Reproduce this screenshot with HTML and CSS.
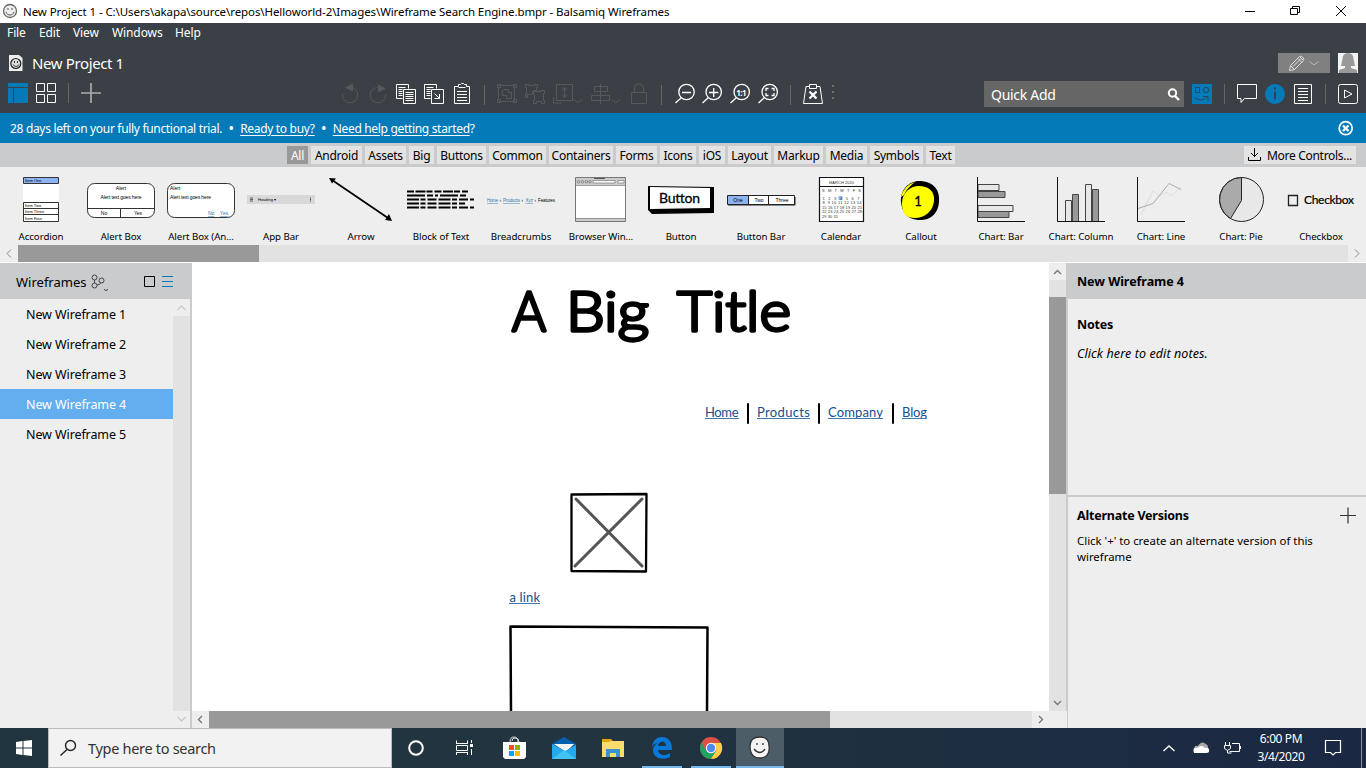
FILE: index.html
```html
<!DOCTYPE html>
<html lang="en">
<head>
<meta charset="utf-8">
<title>New Project 1 - Balsamiq Wireframes</title>
<link rel="stylesheet" href="styles.css">
</head>
<body>
<div class="app">
<header class="titlebar">
  <svg class="logo" width="20" height="23" viewBox="0 0 20 23"><circle cx="10" cy="11" r="6.5" fill="#eee" stroke="#666" stroke-width="1.3"/><path d="M8 8v2M12 8v2M6 12c1 4 7 4 8 0" fill="none" stroke="#555"/></svg>
  <span class="window-title">New Project 1 - C:\Users\akapa\source\repos\Helloworld-2\Images\Wireframe Search Engine.bmpr - Balsamiq Wireframes</span>
  <svg class="push" width="130" height="23" viewBox="1236 0 130 23" fill="none" stroke="#000"><path d="M1245 11.500h10M1290.500 8.500h7v6h-7zM1292.500 8.500v-2h7v6h-2M1336 6l10 10M1346 6l-10 10"/></svg>
</header>
<nav class="menubar"><span class="m1">File</span><span class="m2">Edit</span><span class="m3">View</span><span class="m4">Windows</span><span>Help</span></nav>
<div class="projectbar">
  <svg width="32" height="27" viewBox="0 50 32 27"><path d="M9 55h10l3.500 3v13H9z" fill="#eee"/><circle cx="15.800" cy="63.500" r="5" fill="#ddd" stroke="#222" stroke-width="1.200"/><path d="M14.500 61v2M17.500 61v2M13 64.500c1 2.500 5 2.500 6 0" fill="none" stroke="#222" stroke-width=".9"/></svg>
  <span class="project-name">New Project 1</span>
  <svg class="push" width="92" height="27" viewBox="1274 50 92 27"><path d="M1278 53h52v20h-52z" fill="#808080"/><g fill="none" stroke="#ddd"><path d="M1289.500 70.500l1-5 9-9q2-1 3.500 1t.5 3l-9 9zM1290.500 65.500l4 4M1293 66.500l8-8M1298 58.500l4 4M1300 57l3.500 3.500"/><path d="M1309.500 61.500l4.500 3.500 4.500-3.500" stroke="#bbb"/></g><path d="M1338 53h20v20h-20z" fill="#f4f4f4"/><path d="M1339 73v-3l6-2v-2h-4l1.500-7q0-6 5.500-6t5.500 6l1.500 7h-4v2l6 2v3z" fill="#999"/></svg>
</div>
<div class="toolbar">
  <svg width="110" height="30" viewBox="0 80 110 30"><path d="M8 83h20v4H8zM8 88h5v15H8zM14 88h14v15H14z" fill="#057ab9"/><g fill="none" stroke="#fff"><path d="M36.500 83.500h8v8h-8zM47.500 83.500h8v8h-8zM36.500 94.500h8v8h-8zM47.500 94.500h8v8h-8z"/><path d="M68.500 83v20" stroke="#666"/><path d="M81 93h20M91 83v20" stroke="#aaa" stroke-width="1.700"/></g></svg>
  <div class="tools">
    <svg width="28" height="30" viewBox="336 80 28 30" class="off"><path d="M342.500 94a7.700 7.700 0 1 0 8-6.500"/><path d="M345 87.500l8-4v8z" fill="#585858" stroke="none"/></svg>
    <svg width="28" height="30" viewBox="364 80 28 30" class="off"><path d="M385.500 94a7.700 7.700 0 1 1-8-6.500"/><path d="M386 88.500l-8-4v8z" fill="#585858" stroke="none"/></svg>
    <svg width="28" height="30" viewBox="392 80 28 30" class="on"><path d="M402.500 98.500h-6v-14h12v4M403.500 89.500h12v14h-12zM398.500 87.500h7M398.500 89.500h4M398.500 91.500h4M398.500 93.500h4M398.500 95.500h4M405.500 92.500h8M405.500 94.500h8M405.500 96.500h8M405.500 98.500h8M405.500 100.500h8"/></svg>
    <svg width="28" height="30" viewBox="420 80 28 30" class="on"><path d="M430.500 98.500h-6v-14h12v4M431.500 89.500h12v14h-12zM426.500 87.500h7M426.500 89.500h4M426.500 91.500h4M426.500 93.500h4M426.500 95.500h4M434.500 93.500l5 5M439.500 94v4.500h-5"/></svg>
    <svg width="28" height="30" viewBox="448 80 28 30" class="on"><path d="M454.500 86.500h4v-2h2l1-1h2l1 1h2v2h3v17h-15zM458.500 87.500h7M457 91.500h10M457 94.500h10M457 97.500h10M457 100.500h10"/></svg>
    <i class="sep s1"></i>
    <svg width="28" height="30" viewBox="493 80 28 30" class="off"><path d="M499 85.500h16M499 101.500h16M498.500 87v13M514.500 87v13M497.500 84.500h3v3h-3zM513.500 84.500h3v3h-3zM497.500 99.500h3v3h-3zM513.500 99.500h3v3h-3zM503.500 89.500h5v3h3v6h-5v-3h-4v-5z"/></svg>
    <svg width="28" height="30" viewBox="521 80 28 30" class="off"><path d="M525.500 84.500h3v1h6v-1h3v3h-1v4h-4v3h-5v3h-2v-3h1v-7h-1zM533.500 90.500h3v1h5v-1h3v3h-1v7h1v3h-3v-2h-5v2h-3v-3h1v-7h-1z"/></svg>
    <svg width="38" height="30" viewBox="549 80 38 30" class="off"><path d="M556.500 84.500h16v16h-16zM553.500 97v6h8M564.500 88v9M562 90.500l2.500-3 2.500 3M562 94.500l2.500 3 2.500-3M573.500 99.500l4.500 3 4.500-3"/></svg>
    <svg width="38" height="30" viewBox="587 80 38 30" class="off"><path d="M600.500 84v20M594.500 86.500h13v5h-13zM591.500 95.500h18v5h-18zM611.500 99.500l4.500 3 4.500-3"/></svg>
    <svg width="28" height="30" viewBox="625 80 28 30" class="off"><path d="M631.500 92.500h15v11h-15zM634.500 92v-3q0-5 4.500-5t4.500 5v3"/></svg>
    <i class="sep s2"></i>
    <svg width="28" height="30" viewBox="671 80 28 30" class="zoomer"><circle cx="686.500" cy="92" r="7.700"/><path d="M681 98l-5.500 5M682 92.500h9"/></svg>
    <svg width="28" height="30" viewBox="699 80 28 30" class="zoomer"><circle cx="713.700" cy="92" r="7.700"/><path d="M708 98l-5.500 5M709 92.500h9.500M713.700 88v9"/></svg>
    <svg width="28" height="30" viewBox="727 80 28 30" class="zoomer"><circle cx="741.700" cy="92" r="7.700"/><path d="M736 98l-5.500 5"/><text x="736.200" y="95.500" textLength="10.500" class="onetoone">1:1</text></svg>
    <svg width="28" height="30" viewBox="755 80 28 30" class="zoomer"><circle cx="769.700" cy="92" r="7.700"/><path d="M764 98l-5.500 5M768.500 88.500h-2.500v2.500M771.500 88.500h2.500v2.500M768.500 95.500h-2.500v-2.500M771.500 95.500h2.500v-2.500"/></svg>
    <i class="sep s3"></i>
    <svg width="28" height="30" viewBox="799 80 28 30" class="on"><path d="M809.500 86.500h-3.500l-2.500 17h19l-2.500-17h-3.500M809.500 84.500h7v4h-7z"/><path d="M809.500 91.500l7 7M816.500 91.500l-7 7" stroke-width="2.300"/></svg>
    <svg width="12" height="30" viewBox="827 80 12 30" fill="#707070"><path d="M832 85h2v2h-2zM832 91h2v2h-2zM832 97h2v2h-2z"/></svg>
  </div>
  <div class="quickadd"><span>Quick Add</span><svg width="18" height="26" viewBox="1165 81 18 26" fill="none" stroke="#fff" stroke-width="2"><circle cx="1172.500" cy="93" r="3.700"/><path d="M1175 96l4 4" stroke-width="2.400"/></svg></div>
  <svg width="182" height="30" viewBox="1184 80 182 30" fill="none"><path d="M1192 84h20v20h-20z" fill="#057ab9"/><g stroke="#29465a"><path d="M1195.500 87.500h4v5h-4zM1194.500 97.500q6 5 12 0M1203 96.500h5v5"/><circle cx="1206" cy="90" r="2.700"/></g><path d="M1224.500 84v20M1325.500 84v20" stroke="#666"/><path d="M1237.500 84.500h19v14h-12l-3.500 4v-4h-3.500z" stroke="#fff"/><circle cx="1275" cy="94" r="10" fill="#057ab9"/><path d="M1275 91.500v8M1275 87.500v2" stroke="#2a4355" stroke-width="2"/><path d="M1294.500 84.500h17v19h-17zM1298 88.500h10M1298 91.500h10M1298 94.500h10M1298 97.500h10M1298 100.500h10" stroke="#fff"/><rect x="1338.500" y="84.500" width="19" height="19" rx="2" stroke="#fff"/><path d="M1344.500 90v8l7.500-4z" stroke="#fff"/></svg>
</div>
<div class="trial"><span class="days">28 days left on your fully functional trial.</span><b>•</b><u class="buy">Ready to buy?</u><b>•</b><u class="help">Need help getting started</u><span>?</span>
  <svg class="push" width="34" height="30" viewBox="1332 113 34 30" fill="none" stroke="#fff"><circle cx="1345.700" cy="128.200" r="6.500" stroke-width="1.700"/><path d="M1343 125.500l5.500 5.500M1348.500 125.500l-5.500 5.500" stroke-width="2.300"/></svg></div>
<nav class="tabs">
  <span class="tab w-all">All</span><span class="tab w-android">Android</span><span class="tab w-assets">Assets</span><span class="tab w-big">Big</span><span class="tab w-buttons">Buttons</span><span class="tab w-common">Common</span><span class="tab w-containers">Containers</span><span class="tab w-forms">Forms</span><span class="tab w-icons">Icons</span><span class="tab w-ios">iOS</span><span class="tab w-layout">Layout</span><span class="tab w-markup">Markup</span><span class="tab w-media">Media</span><span class="tab w-symbols">Symbols</span><span class="tab w-text">Text</span>
  <span class="more"><svg width="18" height="18" viewBox="1246 146 18 18" fill="none" stroke="#000"><path d="M1248.500 157v3.500h12V157M1254.500 148v8.500M1251 153l3.500 3.500 3.500-3.500"/></svg><span>More Controls...</span></span>
</nav>
<section class="gallery">
  <figure><svg viewBox="1 170 80 58"><path d="M23 177h36v44H23z" fill="#fff"/><path d="M23.500 177.500h35v6h-35z" fill="#8db4f0"/><path d="M23.500 177.500h35v6h-35zM23.500 202.500h35v19h-35zM23 208.500h36M23 214.500h36" fill="none" stroke="#333"/><g class="tiny"><text x="25" y="182">Item One</text><text x="25" y="207">Item Two</text><text x="25" y="213">Item Three</text><text x="25" y="219.500">Item Four</text></g></svg><figcaption>Accordion</figcaption></figure>
  <figure><svg viewBox="81 170 80 58"><rect x="87.500" y="183.500" width="67" height="34" rx="7" fill="#fff" stroke="#333"/><path d="M88 208.500h66M120.500 208v9" stroke="#333"/><g class="mini" text-anchor="middle"><text x="121" y="190">Alert</text><text x="121" y="199" textLength="41">Alert text goes here</text><text x="104" y="215">No</text><text x="138" y="215">Yes</text></g></svg><figcaption>Alert Box</figcaption></figure>
  <figure><svg viewBox="161 170 80 58"><rect x="167.500" y="183.500" width="67" height="34" rx="7" fill="#fff" stroke="#333"/><g class="mini"><text x="170" y="190">Alert</text><text x="170" y="199" textLength="41">Alert text goes here</text><text x="208" y="215" class="ln">No</text><text x="220" y="215" class="ln">Yes</text></g></svg><figcaption>Alert Box (An...</figcaption></figure>
  <figure><svg viewBox="241 170 80 58"><path d="M247 195h68v9h-68z" fill="#d8d8d8"/><path d="M250 198h3M250 199.500h3M250 201h3" stroke="#444" stroke-width=".8"/><path d="M310.500 197.500v4" stroke="#444" stroke-dasharray="1 .5"/><text x="258" y="201.200" class="tiny">Heading ▾</text></svg><figcaption>App Bar</figcaption></figure>
  <figure><svg viewBox="321 170 80 58"><path d="M332 180l56 38" stroke="#000" stroke-width="1.700"/><path d="M329 178l7 .5-4 5zM392 221l-3-7-4 6z"/></svg><figcaption>Arrow</figcaption></figure>
  <figure><svg viewBox="401 170 80 58"><g stroke="#000" stroke-width="1.800"><path d="M407 191.500h61" stroke-dasharray="7 1.500 10 1 6 2"/><path d="M407 195.500h61" stroke-dasharray="18 2 6 2 3 2"/><path d="M407 199.500h67M407 203.500h58M407 207.500h67" stroke-dasharray="12 1.500 5 2 9 2"/></g></svg><figcaption>Block of Text</figcaption></figure>
  <figure><svg viewBox="481 170 80 58"><g class="tiny crumbs"><text x="487" y="202" textLength="11" class="ln">Home</text><text x="499.500" y="202">›</text><text x="503" y="202" textLength="17" class="ln">Products</text><text x="521.500" y="202">›</text><text x="525.500" y="202" class="ln">Xyz</text><text x="534.500" y="202">›</text><text x="538" y="202" textLength="17">Features</text></g></svg><figcaption>Breadcrumbs</figcaption></figure>
  <figure><svg viewBox="561 170 80 58"><path d="M575.500 177.500h50v44h-50z" fill="#fff" stroke="#777"/><path d="M576 178h49v7h-49zM576 218h49v3h-49z" fill="#ccc"/><path d="M576 185.500h49M576 218.500h49M593 180.500h22v2.500h-22zM618 180.500h6v2.500h-6z" fill="#fff" stroke="#777" stroke-width=".7"/><path d="M594 178.500h11" stroke="#555"/><g fill="none" stroke="#777" stroke-width=".8"><circle cx="578.500" cy="181.800" r="1.300"/><circle cx="582.500" cy="181.800" r="1.300"/><circle cx="586.500" cy="181.800" r="1.300"/><circle cx="590" cy="181.800" r="1.300"/></g></svg><figcaption>Browser Win...</figcaption></figure>
  <figure><svg viewBox="641 170 80 58"><path d="M648 186l66 1v26l-62 1-4-4z"/><path d="M650 187l60 1v20l-60 1z" fill="#fff"/><text x="659" y="203" textLength="41" class="btext">Button</text></svg><figcaption>Button</figcaption></figure>
  <figure><svg viewBox="721 170 80 58"><path d="M727.500 195.500h67v9h-67z" fill="#fff" stroke="#222"/><path d="M728 196h20v8h-20z" fill="#8db4f0"/><path d="M748.500 195v10M768.500 195v10M728 205h67v-8" fill="none" stroke="#222"/><g class="mini" text-anchor="middle"><text x="738" y="202">One</text><text x="759" y="202">Two</text><text x="782" y="202">Three</text></g></svg><figcaption>Button Bar</figcaption></figure>
  <figure><svg viewBox="801 170 80 58"><path d="M819.500 177.500h44v44h-44z" fill="#fff" stroke="#111" stroke-width="1.200"/><path d="M819 186.500h45" stroke="#111"/><circle cx="840.500" cy="198" r="2.300" fill="#8db4f0"/><g class="cal"><text x="829" y="183.500" textLength="25">MARCH 2020</text><text x="822" y="191.500" textLength="39">S  M  T  W  T  F  S</text><text x="822.500" y="199.500" textLength="37">1  2  3  4  5  6  7</text><text x="822.500" y="204" textLength="39">8  9 10 11 12 13 14</text><text x="822" y="208.500" textLength="40">15 16 17 18 19 20 21</text><text x="822" y="213" textLength="40">22 23 24 25 26 27 28</text><text x="822" y="217.500" textLength="16">29 30 31</text></g></svg><figcaption>Calendar</figcaption></figure>
  <figure><svg viewBox="881 170 80 58"><path d="M901 202c-1-12 8-22 20-21 13 1 19 9 18 21-1 13-10 19-21 18s-16-8-17-18z"/><path d="M902 203c0-10 8-17 17-17s16 5 15 15-9 17-19 17-13-6-13-15z" fill="#ff0"/><path d="M901 197q3-12 14-15-9 7-11 13z" fill="#ff0"/><text x="918" y="206" text-anchor="middle" class="one">1</text></svg><figcaption>Callout</figcaption></figure>
  <figure><svg viewBox="961 170 80 58" stroke="#444"><path d="M978 184.500h21v6h-21zM978 205.500h35v6h-35z" fill="#e7e7e7"/><path d="M978 191.500h27v6h-27zM978 211.500h31v6h-31z" fill="#999"/><path d="M977.500 177v44.500h47.500" fill="none" stroke="#111"/></svg><figcaption>Chart: Bar</figcaption></figure>
  <figure><svg viewBox="1041 170 80 58" stroke="#444"><path d="M1065.500 200.500h6v21h-6zM1085.500 184.500h6v37h-6z" fill="#e7e7e7"/><path d="M1072.500 194.500h6v27h-6zM1092.500 189.500h6v32h-6z" fill="#999"/><path d="M1057.500 177v44.500h47.500" fill="none" stroke="#111"/></svg><figcaption>Chart: Column</figcaption></figure>
  <figure><svg viewBox="1121 170 80 58" fill="none"><path d="M1141 215l4-8 8-16 7 5 6-4 5 4 10-9" stroke="#ddd"/><path d="M1138 208.500l15-5 16-20 12 6" stroke="#aaa"/><path d="M1137.500 177v44.500h47.500" stroke="#111"/></svg><figcaption>Chart: Line</figcaption></figure>
  <figure><svg viewBox="1201 170 80 58" stroke="#222"><circle cx="1241.500" cy="199.500" r="22" fill="#e8e8e8"/><path d="M1241.500 177.500v23l-11 18a22 22 0 0 1 11-41z" fill="#aaa"/></svg><figcaption>Chart: Pie</figcaption></figure>
  <figure><svg viewBox="1281 170 80 58"><path d="M1288.500 195.500h9v10h-9z" fill="#eee" stroke="#222" stroke-width="1.300"/><text x="1304" y="204" textLength="50" class="cbtext">Checkbox</text></svg><figcaption>Checkbox</figcaption></figure>
</section>
<div class="hscroll"><svg width="18" height="17" viewBox="0 245 18 17" fill="none" stroke="#888"><path d="M11 249.500l-4 4 4 4"/></svg><div class="thumb"></div><svg class="push end" width="18" height="17" viewBox="1348 245 18 17" fill="none" stroke="#888"><path d="M1355 249.500l4 4-4 4"/></svg></div>
<main class="work">
  <aside class="left">
    <div class="lefthead"><span>Wireframes</span><svg width="104" height="36" viewBox="88 263 104 36" fill="none" stroke="#444"><circle cx="94.500" cy="277.500" r="2.500"/><circle cx="94.500" cy="285.500" r="2.500"/><circle cx="101.500" cy="280.500" r="2.500"/><path d="M94.500 280v3M97 285q3 0 4-2.500M104 289.500l2 1 2-1"/><path d="M144.500 276.500h10v10h-10z" stroke="#000"/><path d="M162 276.500h11M162 281.500h11M162 286.500h11" stroke="#057ab9"/></svg></div>
    <div class="leftbody"><div class="list"><p>New Wireframe 1</p><p>New Wireframe 2</p><p>New Wireframe 3</p><p class="selected">New Wireframe 4</p><p>New Wireframe 5</p></div>
    <div class="vbar faint"><svg width="17" height="17" viewBox="0 0 17 17"><path d="M4.500 11L8.500 7l4 4"/></svg><svg width="17" height="17" viewBox="0 0 17 17"><path d="M4.500 6l4 4 4-4"/></svg></div></div>
  </aside>
  <section class="center">
    <div class="canvasrow">
      <svg class="canvas" width="857" height="448" viewBox="192 263 857 448">
        <g class="big"><text x="512" y="331" textLength="34" lengthAdjust="spacingAndGlyphs">A</text><text x="566" y="331" textLength="83" lengthAdjust="spacingAndGlyphs">Big</text><text x="677" y="331" textLength="114" lengthAdjust="spacingAndGlyphs">Title</text></g>
        <g class="links"><text x="705" y="417" textLength="33.500">Home</text><text x="757" y="417" textLength="53">Products</text><text x="828" y="417" textLength="55">Company</text><text x="902" y="417" textLength="25">Blog</text><text x="509.500" y="602" textLength="30.500">a link</text></g>
        <path d="M705 418.500h34M757 418.500h53M828 418.500h55M902 418.500h25M509 603.500h31" stroke="#4078b0"/>
        <path d="M748 404v19M819 404v19M893 404v19" stroke="#000" stroke-width="2" stroke-linecap="round"/>
        <path d="M571.500 494.500l75-.5-.5 77.500-74.500-.5z" fill="#fff" stroke="#000" stroke-width="2.300" stroke-linejoin="round"/>
        <path d="M576 499l66 67M642 499l-67 67" stroke="#555" stroke-width="3" stroke-linecap="round"/>
        <path d="M511 712l-.5-85.500 197 1-.5 85" fill="none" stroke="#000" stroke-width="2.500" stroke-linejoin="round"/>
      </svg>
      <div class="vbar main"><svg width="17" height="17" viewBox="0 0 17 17"><path d="M5 11L8.500 7.500 12 11"/></svg><div class="vthumb"></div><svg class="down" width="17" height="17" viewBox="0 0 17 17"><path d="M5 7l3.500 3.500L12 7"/></svg></div>
    </div>
    <div class="bottomscroll"><svg width="17" height="17" viewBox="0 0 17 17"><path d="M10 5L6.500 8.500 10 12"/></svg><div class="bthumb"></div><svg class="push end" width="35" height="17" viewBox="0 0 35 17"><path d="M7 5l3.500 3.500L7 12"/></svg></div>
  </section>
  <aside class="right">
    <h2>New Wireframe 4</h2>
    <section class="notes"><h3>Notes</h3><p>Click here to edit notes.</p></section>
    <section class="alts"><div class="althead"><h3>Alternate Versions</h3><svg width="18" height="18" viewBox="0 0 18 18"><path d="M1 8.500h16M9 .5v16" stroke="#333" stroke-width="1.200"/></svg></div><p>Click '+' to create an alternate version of this<br>wireframe</p></section>
  </aside>
</main>
<footer class="taskbar">
  <svg width="48" height="40" viewBox="0 728 48 40"><path d="M16 742l6.500-1v6.500H16zM23.500 741l8.500-1v7.500h-8.500zM16 748.500h6.500v6.500l-6.500-1zM23.500 748.500H32v7.500l-8.500-1z" fill="#fff"/></svg>
  <div class="search"><svg width="39" height="38" viewBox="49 729 39 38" fill="none" stroke="#222" stroke-width="1.400"><circle cx="70.500" cy="745.500" r="5"/><path d="M67 749.500l-6.500 6"/></svg><span>Type here to search</span></div>
  <svg width="344" height="40" viewBox="392 728 344 40"><circle cx="416" cy="748" r="6.800" fill="none" stroke="#fff" stroke-width="2"/><path d="M456.500 743v-2.500M467.500 743v-2.500M456 743.500h12M456.500 745.500h11v5h-11zM456 752.500h12M456.500 752v3M467.500 752v3M471.500 740v3M471.500 749v6" stroke="#fff" fill="none"/><path d="M470 744h3v3h-3z" fill="#fff"/>
  <path d="M503 742h23v15l-2 2h-19l-2-2z" fill="#fff"/><path d="M510 742q0-5 4-5t4 5M512 741q0-3 3-3 4 0 4 4" fill="none" stroke="#ddd"/><path d="M509 745h5v5h-5z" fill="#f25022"/><path d="M515 745h5v5h-5z" fill="#7fba00"/><path d="M509 751h5v5h-5z" fill="#00a4ef"/><path d="M515 751h5v5h-5z" fill="#ffb900"/>
  <path d="M552 744l12-7 12 7v4h-24z" fill="#0760af"/><path d="M554 744h20l-8 8z" fill="#fff"/><path d="M552 744l13 7 11-6v14h-24z" fill="#25a9ed"/><path d="M554 744h20l-9 6z" fill="#f5f5f5"/><path d="M552 759l12-9 12 9z" fill="#42c3f4"/>
  <path d="M602 739h9l2 2h11v4h-22z" fill="#d99b00"/><path d="M602 741h22v16h-22z" fill="#ffdc70"/><path d="M602 739h9v2l-2 1h-7z" fill="#e6a510"/><path d="M606 749h14v8h-4v-4h-6v4h-4z" fill="#3c91d1"/>
  <path d="M652 747c1-7 5-10 10-10 7 0 10 5 10 13h-14c1 6 8 6 12 3v4c-8 4-17 1-17-7 0-3 2-6 5-7-3 0-5 2-6 4zm6-1h8c0-6-7-6-8 0z" fill="#0878d7" fill-rule="evenodd"/>
  <circle cx="711" cy="748" r="11" fill="#dd5144"/><path d="M701.500 742.500L706 751l5 2.500 5-2.500-5 8a11 11 0 0 1-9.500-16.500z" fill="#1da462"/><path d="M711 743h10a11 11 0 0 1-10 16l5.500-9z" fill="#ffcd46"/><circle cx="711" cy="748" r="5.200" fill="#fff"/><circle cx="711" cy="748" r="4.200" fill="#4c8bf5"/>
  <path d="M642 766h40v2h-40zM691 766h40v2h-40z" fill="#76b9ed"/></svg>
  <svg class="current" width="48" height="40" viewBox="736 728 48 40"><path d="M750 746c0-6 4-9 10-9s9 3 9 9c1 7-2 12-9 12s-10-5-10-12z" fill="#f4f4f4" stroke="#333" stroke-width="1.300"/><path d="M757 743v2M763 743v2M754 749q6 7 11 0" fill="none" stroke="#333" stroke-width="1.300"/><path d="M736 766h48v2h-48z" fill="#76b9ed"/></svg>
  <svg class="push" width="92" height="40" viewBox="1154 728 92 40" fill="none" stroke="#fff"><path d="M1163.500 751l5.500-5 5.500 5" stroke-width="1.300"/><path d="M1195 751q-2-6 3-5 4-7 10 0 0 4-2 5z" fill="#aaa" stroke="none"/><path d="M1194 753q-2-6 3-5 5-4 8 0 5-1 4 4-1 1-3 1z" fill="#fff" stroke="none"/><path d="M1232 743.500h7.500v8h-10M1240.500 746v3M1225.500 742v3M1229.500 742v3M1224.500 745.500h6v3l-3 2-3-2zM1227.500 750v3h4" stroke-width="1"/></svg>
  <div class="clock"><span>6:00 PM</span><span>3/4/2020</span></div>
  <svg width="46" height="40" viewBox="1320 728 46 40" fill="none"><path d="M1325.500 740.500h15v12h-5l-2.500 2.500-2.500-2.500h-5z" stroke="#fff" stroke-width="1.200"/><path d="M1361.500 728v40" stroke="#8a929e"/></svg>
</footer>
</div>
</body>
</html>
```

FILE: styles.css
```css
* { box-sizing: border-box; }
body { margin: 0; width: 1366px; height: 768px; overflow: hidden; font-family: "Noto Sans", "Open Sans", sans-serif; font-size: 12px; color: #000; background: #fff; }
svg { display: block; flex: none; }
span, u { white-space: nowrap; }
.app { display: grid; grid-template-columns: 1366px; grid-template-rows: 23px 20px 35px 35px 30px 24px 78px 18px 465px 40px; height: 768px; }
.push { margin-left: auto; }
.titlebar { display: flex; align-items: center; background: #fff; }
.window-title { margin-left: 3px; font-size: 11.5px; letter-spacing: -.09px; }
.menubar { display: flex; align-items: center; padding: 0 0 2px 7px; background: #3a4046; color: #fff; letter-spacing: -.1px; }
.menubar span { width: 52px; }
.menubar .m1 { width: 32px; }
.menubar .m2 { width: 34px; }
.menubar .m3 { width: 39px; }
.menubar .m4 { width: 63px; }
.projectbar { display: flex; align-items: center; padding-top: 6px; background: #3a4046; color: #fff; font-size: 15px; }
.project-name { padding-bottom: 2px; letter-spacing: -.38px; }
.toolbar { display: flex; align-items: flex-start; height: 35px; padding-top: 2px; background: #3a4046; }
.tools { display: flex; align-items: center; margin-left: 226px; }
.on { fill: none; stroke: #fff; }
.off { fill: none; stroke: #585858; }
.zoomer { fill: none; stroke: #fff; stroke-width: 1.3; }
.onetoone { font: bold 8px "Noto Sans", sans-serif; fill: #fff; stroke: none; }
.sep { flex: none; height: 20px; border-left: 1px solid #666; }
.s1 { width: 9px; margin-left: 8px; }
.s2 { width: 10px; margin-left: 8px; }
.s3 { width: 9px; margin-left: 7px; }
.quickadd { display: flex; align-items: center; justify-content: space-between; width: 200px; height: 26px; margin-top: 1px; margin-left: auto; padding: 0 1px 0 7px; background: #666; color: #fff; font-size: 14px; letter-spacing: -.3px; }
.trial { display: flex; align-items: center; padding-left: 10px; background: #057ab9; color: #fff; letter-spacing: -.32px; }
.trial b { width: 18px; text-align: center; }
.trial u { text-underline-offset: 2px; }
.tabs { display: flex; align-items: center; gap: 3px; padding: 0 10px 0 287px; background: #cacbcd; }
.tab { height: 18px; line-height: 19px; background: #e3e3e3; text-align: center; flex: none; letter-spacing: -.25px; }
.w-all { width: 21px; background: #999; color: #fff; }
.w-android { width: 51px; }
.w-assets { width: 41px; }
.w-big { width: 25px; }
.w-buttons { width: 49px; }
.w-common { width: 57px; }
.w-containers { width: 64px; }
.w-forms { width: 41px; }
.w-icons { width: 36px; }
.w-ios { width: 26px; }
.w-layout { width: 43px; }
.w-markup { width: 49px; }
.w-media { width: 41px; }
.w-symbols { width: 53px; }
.w-text { width: 29px; }
.more { display: flex; align-items: center; gap: 3px; width: 112px; height: 18px; margin-left: auto; padding-left: 2px; background: #e3e3e3; letter-spacing: -.3px; }
.gallery { display: flex; padding: 3px 0 0 1px; background: #eee; }
figure { width: 80px; margin: 0; flex: none; }
figure svg { width: 80px; height: 58px; }
figcaption { height: 17px; line-height: 17px; text-align: center; font-size: 9.7px; letter-spacing: -.07px; white-space: nowrap; }
.tiny { font: 4px "Liberation Sans", sans-serif; stroke: none; }
.crumbs { font-size: 4.5px; }
.mini { font: 5px "Liberation Sans", sans-serif; stroke: none; }
.cal { font: 4px "Liberation Sans", sans-serif; fill: #333; }
.cal text { white-space: pre; }
.ln { fill: #3178ad; text-decoration: underline; }
.btext { font: 14px Lato, sans-serif; stroke: #000; stroke-width: .3; }
.cbtext { font: 12px Lato, sans-serif; stroke: #000; stroke-width: .2; }
.one { font: 13px Lato, sans-serif; stroke: #000; stroke-width: .3; }
.hscroll { display: flex; height: 17px; background: #e2e2e2; }
.hscroll svg { background: #eee; }
.thumb { width: 241px; background: #999; }
.work { display: flex; }
.left { display: flex; flex-direction: column; width: 192px; border-right: 2px solid #cacbcd; background: #eee; }
.lefthead { display: flex; align-items: center; height: 36px; width: 192px; padding-left: 16px; background: #cacbcd; font-size: 13px; }
.lefthead span { width: 72px; padding-top: 2px; }
.leftbody { display: flex; flex: 1; }
.list { width: 173px; }
.list p { height: 30px; margin: 0; padding-left: 26px; line-height: 32px; font-size: 12.5px; letter-spacing: -.1px; }
.list .selected { background: #63aeee; color: #fff; }
.vbar { display: flex; flex-direction: column; justify-content: space-between; width: 17px; background: #e2e2e2; }
.vbar svg, .bottomscroll svg { background: #eee; fill: none; stroke: #777; stroke-width: 1.4; }
.faint svg { stroke: #ccc; }
.center { width: 875px; }
.canvasrow { display: flex; height: 448px; }
.canvas { background: #fff; }
.main { width: 18px; justify-content: flex-start; border-right: 1px solid #cacbcd; }
.vthumb { height: 197px; margin-top: 17px; background: #999; }
.vbar .down { margin-top: auto; background: #e2e2e2; }
.big { font: 300 56px Lato, sans-serif; stroke: #000; stroke-width: 3.4; stroke-linejoin: round; }
.links { font: 13px Lato, sans-serif; fill: #144f90; }
.bottomscroll { display: flex; height: 17px; background: #e2e2e2; }
.bthumb { width: 621px; background: #999; }
.right { width: 299px; border-left: 1px solid #cacbcd; background: #eee; }
.right h2 { height: 36px; margin: 0; padding-left: 9px; line-height: 38px; font-size: 12.5px; letter-spacing: -.05px; background: #cacbcd; }
.right h3 { margin: 0; font-size: 12.5px; line-height: 18px; letter-spacing: -.22px; }
.right p { margin: 0; font-size: 11.4px; line-height: 16px; }
.notes { height: 198px; padding: 17px 9px 0; border-bottom: 2px solid #cacbcd; }
.notes .h3 { letter-spacing: 0; }
.right .notes p { margin-top: 12px; font-size: 12.5px; letter-spacing: .1px; font-style: italic; }
.alts { padding: 10px 9px 0; }
.althead { display: flex; justify-content: space-between; align-items: center; margin-bottom: 8px; }
.taskbar { display: flex; background: linear-gradient(90deg, #20353f 0%, #21343f 45%, #1c2c41 80%, #1b2844 100%); color: #fff; }
.search { display: flex; align-items: center; width: 344px; border: 1px solid #bbb; background: #f2f2f2; color: #333; font-size: 14.5px; letter-spacing: -.3px; }
.current { background: #4d5d68; }
.clock { display: flex; flex-direction: column; align-items: center; width: 74px; padding: 2px 4px 0 0; line-height: 18px; font-size: 12px; letter-spacing: -.4px; }
```
